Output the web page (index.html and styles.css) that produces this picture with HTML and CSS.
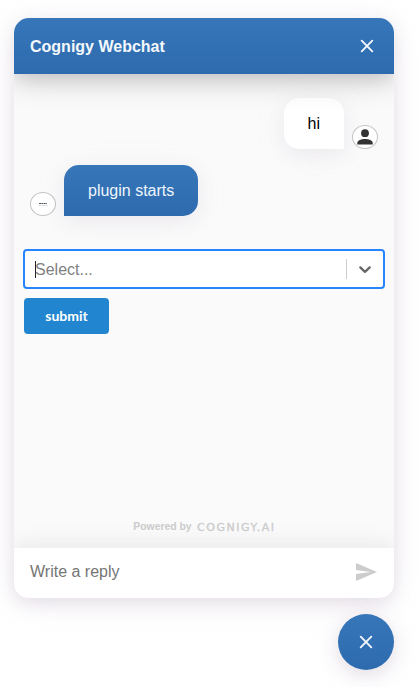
FILE: index.html
```html
<!DOCTYPE html>
<html lang="en">
<head>
<meta charset="utf-8">
<title>Cognigy Webchat</title>
<link rel="stylesheet" href="styles.css">
</head>
<body>
<main class="webchat">
  <header class="header">
    <h1 class="title">Cognigy Webchat</h1>
    <button class="close" aria-label="Close"><svg width="14" height="14" viewBox="0 0 14 14"><path d="M1.700 1.700l10.600 10.600M12.300 1.700l-10.600 10.600"/></svg></button>
  </header>
  <section class="history">
    <div class="row user">
      <div class="bubble">hi</div>
      <div class="avatar"><svg width="16" height="16" viewBox="0 0 16 16"><circle cx="8" cy="4.200" r="3.900"/><path d="M.3 15.400v-1.500C.3 11.200 4.600 9.900 8 9.900s7.700 1.300 7.700 4v1.500z"/></svg></div>
    </div>
    <div class="row bot">
      <div class="avatar"><svg width="12" height="4" viewBox="0 0 12 4"><path class="mark" d="M2 1.500h8"/><path class="line" d="M1 3.500h10"/></svg></div>
      <div class="bubble">plugin starts</div>
    </div>
    <div class="plugin">
      <div class="select">
        <span class="caret"></span>
        <span class="placeholder">Select...</span>
        <span class="separator"></span>
        <svg class="chevron" width="20" height="20" viewBox="0 0 20 20"><path d="M4.516 7.548c0.436-0.446 1.043-0.481 1.576 0l3.908 3.747 3.908-3.747c0.533-0.481 1.141-0.446 1.574 0 0.436 0.445 0.408 1.197 0 1.615-0.406 0.418-4.695 4.502-4.695 4.502-0.217 0.223-0.502 0.335-0.787 0.335s-0.570-0.112-0.789-0.335c0 0-4.287-4.084-4.695-4.502s-0.436-1.170 0-1.615z"/></svg>
      </div>
      <button class="submit">submit</button>
    </div>
    <div class="branding">
      <span>Powered by</span>
      <svg class="logo" width="80" height="16" viewBox="0 0 80 16"><text x="0" y="12" textLength="77" lengthAdjust="spacing">COGNIGY.AI</text></svg>
    </div>
  </section>
  <footer class="composer">
    <input class="reply" placeholder="Write a reply" aria-label="Reply">
    <svg width="21" height="18" viewBox="0 0 21 18"><path d="M0 0l21 9L0 18v-7l15-2L0 7z"/></svg>
  </footer>
</main>
<button class="toggle" aria-label="Close chat"><svg width="14" height="14" viewBox="0 0 14 14"><path d="M1.700 1.700l10.600 10.600M12.300 1.700l-10.600 10.600"/></svg></button>
</body>
</html>
```
FILE: styles.css
```css
* { box-sizing: border-box; }
body {
  margin: 0;
  padding: 18px 25px 17px 14px;
  height: 687px;
  overflow: hidden;
  display: flex;
  flex-direction: column;
  gap: 16px;
  background: #fff;
  font: 16px "Liberation Sans", Arial, sans-serif;
}
button { border: 0; padding: 0; font: inherit; }
.webchat {
  height: 580px;
  display: flex;
  flex-direction: column;
  border-radius: 15px;
  overflow: hidden;
  background: #fafafa;
  box-shadow: 0 5px 18px rgba(151, 124, 156, .2), 0 5px 32px rgba(203, 195, 212, .2);
}
.header {
  flex: 0 0 56px;
  display: flex;
  align-items: center;
  justify-content: space-between;
  padding: 0 20px 0 16px;
  background: linear-gradient(#3776b9, #2d6bae);
  color: #fff;
  position: relative;
  z-index: 1;
  box-shadow: 0 5px 18px rgba(0, 0, 0, .08), 0 5px 32px rgba(0, 0, 0, .2);
}
.title { margin: 0; padding-top: 2px; font-size: 16px; line-height: 20px; color: #f4f8fc; }
.close, .toggle {
  display: flex;
  align-items: center;
  justify-content: center;
  background: none;
}
.close svg, .toggle svg { fill: none; stroke: #f4f8fc; stroke-width: 1.9; stroke-linecap: round; }
.history {
  flex: 1;
  display: flex;
  flex-direction: column;
  padding-top: 24px;
}
.row { display: flex; align-items: flex-end; gap: 8px; padding: 0 16px; }
.user { justify-content: flex-end; }
.bot { margin-top: 16px; }
.bubble {
  height: 51px;
  padding: 0 24px;
  line-height: 51px;
  box-shadow: 0 5px 18px rgba(151, 124, 156, .1), 0 5px 32px rgba(203, 195, 212, .1);
}
.user .bubble { border-radius: 15px 15px 0 15px; background: #fff; color: #000; }
.bot .bubble { border-radius: 15px 15px 15px 0; background: linear-gradient(#3776b9, #2d6bae); color: #eef5fc; }
.avatar {
  width: 26px;
  height: 24px;
  border: 1px solid #c4c4c4;
  border-radius: 50%;
  display: flex;
  align-items: center;
  justify-content: center;
  background: #fff;
}
.avatar svg { fill: #333; }
.mark { stroke: #555; stroke-width: 1; stroke-dasharray: 2 .4; }
.line { stroke: #cad8e0; stroke-width: .7; }
.plugin { margin: 33px 9px 0; }
.select {
  height: 40px;
  display: flex;
  align-items: center;
  border: 2px solid #2684ff;
  border-radius: 4px;
  background: #fff;
  padding: 0 8px 0 10px;
}
.caret { width: 1px; height: 17px; background: #222; margin-right: -1px; }
.placeholder { flex: 1; padding-top: 2px; color: #808080; }
.separator { width: 1px; height: 20px; background: #ccc; margin-right: 8px; }
.chevron { fill: #666; }
.submit {
  display: block;
  width: 85px;
  height: 36px;
  margin: 9px 0 0 1px;
  padding-bottom: 2px;
  border-radius: 4px;
  background: #2185d0;
  color: #fff;
  font: 700 14px Lato, sans-serif;
}
.branding {
  margin-top: auto;
  height: 43px;
  display: flex;
  justify-content: center;
  align-items: center;
  gap: 5px;
  padding-left: 2px;
  font-size: 10.4px;
  font-weight: 700;
  color: #ccc;
}
.logo text { font: 400 11px "DejaVu Sans", sans-serif; fill: #ccc; stroke: #ccc; stroke-width: .3; }
.composer {
  flex: 0 0 50px;
  display: flex;
  align-items: center;
  padding: 0 17px 2px 16px;
  background: #fff;
  box-shadow: 0 -5px 18px rgba(0, 0, 0, .04), 0 -5px 32px rgba(0, 0, 0, .03);
}
.reply { flex: 1; min-width: 0; border: 0; padding: 0; outline: 0; font: inherit; background: none; }
.reply::placeholder { color: #757575; opacity: 1; }
.composer svg { fill: #ccc; }
.toggle {
  align-self: flex-end;
  flex: 0 0 56px;
  width: 56px;
  border-radius: 50%;
  background: linear-gradient(#3776b9, #2d6bae);
  box-shadow: 0 5px 18px rgba(151, 124, 156, .2), 0 5px 32px rgba(203, 195, 212, .2);
}
```
